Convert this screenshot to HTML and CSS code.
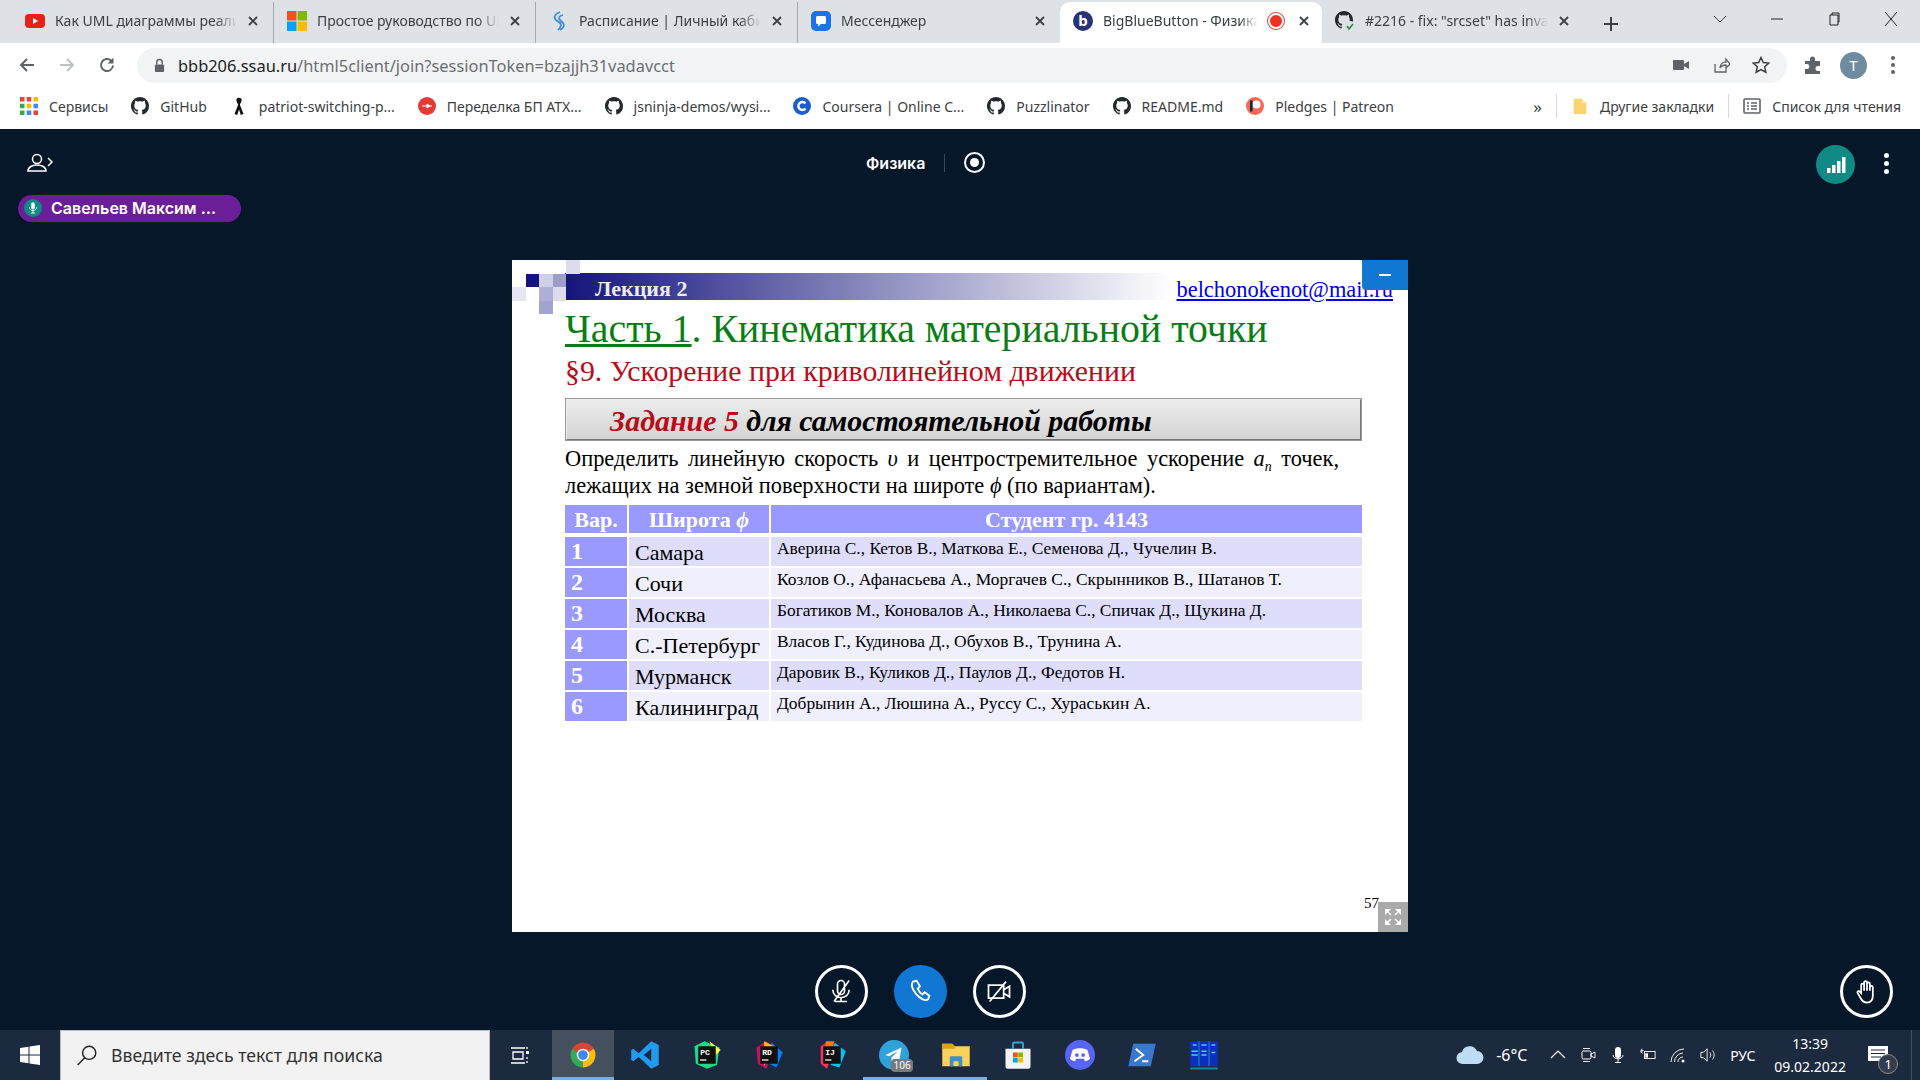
FILE: index.html
```html
<!DOCTYPE html>
<html lang="ru">
<head>
    <meta charset="UTF-8">
    <title>BigBlueButton - Физика</title>
    <link rel="stylesheet" href="styles.css">
</head>
<body>
    <svg class="defs" width="0" height="0">
        <symbol id="gh" viewBox="0 0 16 16"><path d="M8 0C3.58 0 0 3.58 0 8c0 3.54 2.29 6.53 5.47 7.59.4.07.55-.17.55-.38 0-.19-.01-.82-.01-1.49-2.01.37-2.53-.49-2.69-.94-.09-.23-.48-.94-.82-1.13-.28-.15-.68-.52-.01-.53.63-.01 1.08.58 1.23.82.72 1.21 1.87.87 2.33.66.07-.52.28-.87.51-1.07-1.78-.2-3.64-.89-3.64-3.95 0-.87.31-1.59.82-2.15-.08-.2-.36-1.02.08-2.12 0 0 .67-.21 2.2.82.64-.18 1.32-.27 2-.27.68 0 1.36.09 2 .27 1.53-1.04 2.2-.82 2.2-.82.44 1.1.16 1.92.08 2.12.51.56.82 1.27.82 2.15 0 3.07-1.87 3.75-3.65 3.95.29.25.54.73.54 1.48 0 1.07-.01 1.93-.01 2.2 0 .21.15.46.55.38A8.013 8.013 0 0016 8c0-4.42-3.58-8-8-8z"/></symbol>
        <symbol id="x" viewBox="0 0 12 12"><path d="M2 2l8 8M10 2l-8 8" fill="none" stroke="#3c4043" stroke-width="1.8"/></symbol>
    </svg>

    <!-- Tabs -->
    <div class="tabstrip">
        <div class="tab">
            <svg class="fav" viewBox="0 0 20 20"><rect y="3" width="20" height="14" rx="4" fill="#e62117"/><path d="M8 7l5 3-5 3z" fill="#fff"/></svg>
            <span class="tab-title">Как UML диаграммы реализуют</span>
            <svg class="tab-x"><use href="#x"/></svg>
        </div>
        <div class="tab">
            <svg class="fav" viewBox="0 0 20 20"><rect width="9.5" height="9.5" fill="#f25022"/><rect x="10.5" width="9.5" height="9.5" fill="#7fba00"/><rect y="10.5" width="9.5" height="9.5" fill="#00a4ef"/><rect x="10.5" y="10.5" width="9.5" height="9.5" fill="#ffb900"/></svg>
            <span class="tab-title">Простое руководство по UML</span>
            <svg class="tab-x"><use href="#x"/></svg>
        </div>
        <div class="tab">
            <svg class="fav" viewBox="0 0 20 20"><path d="M11 1C6 3 4 6 7 9l4 3c2 2 1 4-2 7M14 4c-4 1-5 3-3 5l3 3c2 2 1 5-3 7" fill="none" stroke="#3f8fdc" stroke-width="1.8"/></svg>
            <span class="tab-title">Расписание | Личный кабинет</span>
            <svg class="tab-x"><use href="#x"/></svg>
        </div>
        <div class="tab tab-last">
            <svg class="fav" viewBox="0 0 20 20"><rect width="20" height="20" rx="5" fill="#1a73e8"/><path d="M5 6.5a1.5 1.5 0 0 1 1.5-1.5h7a1.5 1.5 0 0 1 1.5 1.5v5a1.5 1.5 0 0 1-1.5 1.5H10l-3 2.5V13h-.5A1.5 1.5 0 0 1 5 11.5z" fill="#fff"/></svg>
            <span class="tab-title">Мессенджер</span>
            <svg class="tab-x"><use href="#x"/></svg>
        </div>
        <div class="tab tab-active">
            <svg class="fav" viewBox="0 0 20 20"><circle cx="10" cy="10" r="10" fill="#283274"/><text x="10" y="15" text-anchor="middle" class="fav-b">b</text></svg>
            <span class="tab-title">BigBlueButton - Физика</span>
            <span class="rec-dot"></span>
            <svg class="tab-x"><use href="#x"/></svg>
        </div>
        <div class="tab tab-last">
            <svg class="fav" viewBox="0 0 20 20"><use href="#gh" width="18" height="18" fill="#24292e"/><circle cx="15" cy="15" r="5" fill="#dee1e6"/><path d="M12 15l2 3 4-5" fill="none" stroke="#22863a" stroke-width="1.5"/></svg>
            <span class="tab-title">#2216 - fix: "srcset" has invalid</span>
            <svg class="tab-x"><use href="#x"/></svg>
        </div>
        <svg class="new-tab" viewBox="0 0 16 16"><path d="M8 1v14M1 8h14" stroke="#3c4043" stroke-width="2"/></svg>
        <div class="win-controls">
            <svg viewBox="0 0 14 14"><path d="M1 4l6 6 6-6" fill="none" stroke="#3c4043"/></svg>
            <svg viewBox="0 0 14 14"><path d="M1 7h12" stroke="#222"/></svg>
            <svg viewBox="0 0 14 14"><path d="M3 3h8v10H3zM5 3V1h7v9h-1" fill="none" stroke="#222"/></svg>
            <svg viewBox="0 0 14 14"><path d="M1 0l12 14M13 0L1 14" fill="none" stroke="#222"/></svg>
        </div>
    </div>

    <!-- Address bar -->
    <div class="toolbar">
        <svg class="tb-icon" viewBox="0 0 18 18"><path d="M16 9H3M9 3L3 9l6 6" fill="none" stroke="#5f6368" stroke-width="2"/></svg>
        <svg class="tb-icon" viewBox="0 0 18 18"><path d="M2 9h13M9 3l6 6-6 6" fill="none" stroke="#bdc1c6" stroke-width="2"/></svg>
        <svg class="tb-icon" viewBox="0 0 18 18"><path d="M15 9.5A6 6 0 1 1 13.2 4.7" fill="none" stroke="#5f6368" stroke-width="2"/><path d="M15.5 1.5v6h-6z" fill="#5f6368"/></svg>
        <div class="omnibox">
            <svg class="lock" viewBox="0 0 12 16"><path d="M3 7V4.5a3 3 0 0 1 6 0V7" fill="none" stroke="#5f6368" stroke-width="1.5"/><rect x="1" y="7" width="10" height="8" rx="1" fill="#5f6368"/></svg>
            <span class="url"><b>bbb206.ssau.ru</b>/html5client/join?sessionToken=bzajjh31vadavcct</span>
            <div class="omni-actions">
                <svg viewBox="0 0 18 18"><rect x="1" y="4" width="11" height="10" rx="1" fill="#5f6368"/><path d="M12 8l5-3v8l-5-3z" fill="#5f6368"/></svg>
                <svg viewBox="0 0 18 18"><path d="M3 8v8h11v-5M8 12c0-4 3-6 6-6V3l4 5-4 4V9c-3 0-5 1-6 3z" fill="none" stroke="#5f6368" stroke-width="1.3"/></svg>
                <svg viewBox="0 0 18 18"><path d="M9 1.5l2.3 5 5.4.6-4 3.7 1.1 5.4L9 13.5l-4.8 2.7 1.1-5.4-4-3.7 5.4-.6z" fill="none" stroke="#3c4043" stroke-width="1.5"/></svg>
            </div>
        </div>
        <svg class="tb-puzzle" viewBox="0 0 20 20"><path d="M2 6h5V4a2.5 2.5 0 0 1 5 0v2h5v5h-2a2.5 2.5 0 0 0 0 5h2v3H2v-5h2a2.5 2.5 0 0 0 0-5H2z" fill="#5f6368"/></svg>
        <div class="avatar">T</div>
        <div class="kebab"><i></i><i></i><i></i></div>
    </div>

    <!-- Bookmarks -->
    <div class="bookmarks">
        <a class="bm">
            <svg viewBox="0 0 16 16"><rect width="4" height="4" fill="#ea4335"/><rect x="6" width="4" height="4" fill="#ea4335"/><rect x="12" width="4" height="4" fill="#fbbc04"/><rect y="6" width="4" height="4" fill="#34a853"/><rect x="6" y="6" width="4" height="4" fill="#fbbc04"/><rect x="12" y="6" width="4" height="4" fill="#4285f4"/><rect y="12" width="4" height="4" fill="#34a853"/><rect x="6" y="12" width="4" height="4" fill="#4285f4"/><rect x="12" y="12" width="4" height="4" fill="#ea4335"/></svg>
            Сервисы
        </a>
        <a class="bm"><svg class="gh-mark"><use href="#gh"/></svg>GitHub</a>
        <a class="bm">
            <svg viewBox="0 0 16 20"><path d="M8 6l5 13-3 1-2-6-2 6-3-1zM8 8c2-2 2-4 1-6H7C6 4 6 6 8 8z" fill="#111"/><path d="M5 3c0-3 6-3 6 0 0 2-2 5-3 7-1-2-3-5-3-7z" fill="#111"/></svg>
            patriot-switching-p...
        </a>
        <a class="bm">
            <svg viewBox="0 0 18 18"><circle cx="9" cy="9" r="9" fill="#e53935"/><path d="M4 9h10M9 7l3 2-3 2z" stroke="#fff" fill="#fff"/></svg>
            Переделка БП АТХ...
        </a>
        <a class="bm"><svg class="gh-mark"><use href="#gh"/></svg>jsninja-demos/wysi...</a>
        <a class="bm">
            <svg viewBox="0 0 18 18"><circle cx="9" cy="9" r="9" fill="#1a5dd0"/><path d="M12.5 6.5a4 4 0 1 0 0 5" fill="none" stroke="#fff" stroke-width="2.5"/></svg>
            Coursera | Online C...
        </a>
        <a class="bm"><svg class="gh-mark"><use href="#gh"/></svg>Puzzlinator</a>
        <a class="bm"><svg class="gh-mark"><use href="#gh"/></svg>README.md</a>
        <a class="bm">
            <svg viewBox="0 0 18 18"><circle cx="9" cy="9" r="9" fill="#f96854"/><circle cx="10.5" cy="7.5" r="4" fill="#fff"/><rect x="4" y="3.5" width="2.5" height="11" fill="#052d49"/></svg>
            Pledges | Patreon
        </a>
        <div class="bm-right">
            <span class="bm-more">»</span>
            <span class="bm-sep"></span>
            <a class="bm">
                <svg viewBox="0 0 16 20"><path d="M1 2h9l5 5v12H1z" fill="#fbd46d"/><path d="M10 2l5 5h-5z" fill="#fce9a8"/></svg>
                Другие закладки
            </a>
            <span class="bm-sep"></span>
            <a class="bm">
                <svg viewBox="0 0 18 18"><rect x="1" y="2" width="16" height="14" rx="1" fill="none" stroke="#5f6368" stroke-width="1.6"/><path d="M4 6h2M8 6h6M4 9h2M8 9h6M4 12h2M8 12h6" stroke="#5f6368" stroke-width="1.4"/></svg>
                Список для чтения
            </a>
        </div>
    </div>

    <!-- BigBlueButton -->
    <main class="room">
        <div class="room-nav">
            <svg class="userlist-btn" viewBox="0 0 28 20"><circle cx="11" cy="6" r="4.5" fill="none" stroke="#fff" stroke-width="1.5"/><path d="M2 18c0-8 18-8 18 0z" fill="none" stroke="#fff" stroke-width="1.5"/><path d="M22 5l4 4-4 4" fill="none" stroke="#fff" stroke-width="1.5"/></svg>
            <div class="room-title">
                <span class="room-name">Физика</span>
                <span class="room-sep"></span>
                <span class="rec-btn"><i></i></span>
            </div>
            <div class="room-right">
                <span class="conn">
                    <svg viewBox="0 0 20 16"><rect x="1" y="11" width="3.5" height="5" fill="#fff"/><rect x="6" y="8" width="3.5" height="8" fill="#fff"/><rect x="11" y="4" width="3.5" height="12" fill="#fff"/><rect x="16" y="0" width="3.5" height="16" fill="#fff"/></svg>
                </span>
                <div class="room-dots"><i></i><i></i><i></i></div>
            </div>
        </div>

        <div class="talkers">
            <div class="talker">
                <span class="talker-mic">
                    <svg viewBox="0 0 14 16"><rect x="4.5" y="0" width="5" height="10" rx="2.5" fill="#fff"/><path d="M2 7c0 6 10 6 10 0M7 12v3M4 15h6" fill="none" stroke="#fff" stroke-width="1.3"/></svg>
                </span>
                Савельев Максим …
            </div>
        </div>

        <div class="stage">
            <section class="slide">
                <svg class="slide-deco" viewBox="0 0 5 4" shape-rendering="crispEdges">
                    <rect x="4" y="0" width="1" height="1" fill="#dcdcee"/>
                    <rect x="1" y="1" width="1" height="1" fill="#14147c"/>
                    <rect x="2" y="1" width="1" height="1" fill="#cfcfe8"/>
                    <rect x="3" y="1" width="1" height="1" fill="#9d9dcc"/>
                    <rect x="0" y="2" width="1" height="1" fill="#e6e6f3"/>
                    <rect x="2" y="2" width="1" height="1" fill="#aeaed6"/>
                    <rect x="3" y="2" width="1" height="1" fill="#dcdcee"/>
                    <rect x="2" y="3" width="1" height="1" fill="#a3a3d0"/>
                </svg>
                <div class="slide-banner">
                    <span class="slide-lecture">Лекция 2</span>
                    <a class="slide-mail">belchonokenot@mail.ru</a>
                </div>
                <h1 class="slide-h1"><u>Часть 1</u>. Кинематика материальной точки</h1>
                <h2 class="slide-h2">§9. Ускорение при криволинейном движении</h2>
                <div class="task-box"><em>Задание 5</em> для самостоятельной работы</div>
                <p class="task-text">Определить линейную скорость <i>υ</i> и центростремительное ускорение <i>a<sub>n</sub></i> точек, лежащих на земной поверхности на широте <i>ϕ</i> (по вариантам).</p>
                <table class="variants">
                    <thead>
                        <tr><th class="col-var">Вар.</th><th class="col-city">Широта <i>ϕ</i></th><th>Студент гр. 4143</th></tr>
                    </thead>
                    <tbody>
                        <tr><td class="num">1</td><td class="city">Самара</td><td class="names">Аверина С., Кетов В., Маткова Е., Семенова Д., Чучелин В.</td></tr>
                        <tr><td class="num">2</td><td class="city">Сочи</td><td class="names">Козлов О., Афанасьева А., Моргачев С., Скрынников В., Шатанов Т.</td></tr>
                        <tr><td class="num">3</td><td class="city">Москва</td><td class="names">Богатиков М., Коновалов А., Николаева С., Спичак Д., Щукина Д.</td></tr>
                        <tr><td class="num">4</td><td class="city">С.-Петербург</td><td class="names">Власов Г., Кудинова Д., Обухов В., Трунина А.</td></tr>
                        <tr><td class="num">5</td><td class="city">Мурманск</td><td class="names">Даровик В., Куликов Д., Паулов Д., Федотов Н.</td></tr>
                        <tr><td class="num">6</td><td class="city">Калининград</td><td class="names">Добрынин А., Люшина А., Руссу С., Хураськин А.</td></tr>
                    </tbody>
                </table>
                <button class="slide-min"><span></span></button>
                <span class="slide-page">57</span>
                <button class="slide-full">
                    <svg viewBox="0 0 20 20"><path d="M2 2h6L2 8zM18 2v6l-6-6zM2 18v-6l6 6zM18 18h-6l6-6z" fill="#fff"/><path d="M4 4l4 4M16 4l-4 4M4 16l4-4M16 16l-4-4" stroke="#fff" stroke-width="1.5"/></svg>
                </button>
            </section>
        </div>

        <div class="actions">
            <div class="actions-center">
                <button class="round-btn">
                    <svg viewBox="0 0 24 24"><path d="M9 12V6a3 3 0 0 1 6 0v6a3 3 0 0 1-6 0zM5 11c0 9 14 9 14 0M12 18v3M7 21h10M6 21L19 3" fill="none" stroke="#fff" stroke-width="1.4"/></svg>
                </button>
                <button class="round-btn round-blue">
                    <svg viewBox="0 0 24 24"><path d="M6 4l3-1 3 5-2 2c1 2 2 4 4 5l2-2 4 3-1 3c-1 1-3 1-5 0-4-2-8-7-9-11 0-2 0-3 1-4z" fill="none" stroke="#fff" stroke-width="1.6"/></svg>
                </button>
                <button class="round-btn">
                    <svg viewBox="0 0 24 24"><path d="M3 7h13v11H3zM16 11l5-3v9l-5-3zM4 21L18 4" fill="none" stroke="#fff" stroke-width="1.5"/></svg>
                </button>
            </div>
            <button class="round-btn round-hand">
                <svg viewBox="0 0 24 24"><path d="M7 13V6a1.2 1.2 0 0 1 2.5 0v5V4a1.2 1.2 0 0 1 2.5 0v7V5a1.2 1.2 0 0 1 2.5 0v6-3a1.2 1.2 0 0 1 2.5 0v7c0 4-2 6-5 6-2.5 0-4-1-5-3l-3-5c-.8-1.5 1-2.5 2-1z" fill="none" stroke="#fff" stroke-width="1.5"/></svg>
            </button>
        </div>
    </main>

    <!-- Windows taskbar -->
    <footer class="taskbar">
        <div class="start">
            <svg viewBox="0 0 20 20"><path d="M0 3l8.5-1.2V9.5H0zM9.5 1.6L20 0v9.5H9.5zM0 10.5h8.5v7.7L0 17zM9.5 10.5H20V20L9.5 18.4z" fill="#fff"/></svg>
        </div>
        <div class="search">
            <svg viewBox="0 0 20 20"><circle cx="12" cy="8" r="6" fill="none" stroke="#222" stroke-width="1.3"/><path d="M8 12.5L1.5 19" stroke="#222" stroke-width="1.3"/></svg>
            Введите здесь текст для поиска
        </div>
        <div class="task-apps">
            <span class="app">
                <svg viewBox="0 0 22 22"><path d="M1 4h14M3 8h10v7H3zM1 19h14M17 3v2M17 13v2M17 17v2" fill="none" stroke="#fff" stroke-width="1.3"/><rect x="16" y="7" width="3" height="3" fill="#fff"/></svg>
            </span>
            <span class="app app-active">
                <svg viewBox="0 0 24 24"><path d="M12 12L3.34 7A10 10 0 0 1 20.66 7z" fill="#db4437"/><path d="M12 12L20.66 7A10 10 0 0 1 12 22z" fill="#fbbc05"/><path d="M12 12L12 22A10 10 0 0 1 3.34 7z" fill="#34a853"/><circle cx="12" cy="12" r="5" fill="#fff"/><circle cx="12" cy="12" r="3.9" fill="#4285f4"/></svg>
            </span>
            <span class="app">
                <svg viewBox="0 0 24 24"><path d="M17 1l6 3v16l-6 3L7 13.5 2.5 17 1 16v-8l1.5-1L7 10.5zM17 7l-6 5 6 5z" fill="#1f9cf0" fill-rule="evenodd"/></svg>
            </span>
            <span class="app">
                <svg viewBox="0 0 24 24"><path d="M2 5l8-4 12 5-2 14-8 3-9-4z" fill="#21d789"/><path d="M14 1l9 7-5 5z" fill="#fcf84a"/><rect x="5" y="5" width="14" height="14" fill="#111"/><text x="6.5" y="12" class="jb-label">PC</text><rect x="6.5" y="15.5" width="5" height="1" fill="#fff"/></svg>
            </span>
            <span class="app">
                <svg viewBox="0 0 24 24"><path d="M2 6l8-5 6 4-6 18-7-4z" fill="#c90f5e"/><path d="M14 2l9 8-5 12-6-3z" fill="#087cfa"/><path d="M8 1l8 4-8 16z" fill="#fdb60d"/><rect x="5" y="5" width="14" height="14" fill="#111"/><text x="6.5" y="12" class="jb-label">RD</text><rect x="6.5" y="15.5" width="5" height="1" fill="#fff"/></svg>
            </span>
            <span class="app">
                <svg viewBox="0 0 24 24"><path d="M3 5l6-4 6 3-7 19-5-4z" fill="#fe315d"/><path d="M14 2l9 7-5 13-7-2z" fill="#07c3f2"/><path d="M7 1h7L7 18z" fill="#f97a12"/><rect x="5" y="5" width="14" height="14" fill="#111"/><text x="6.5" y="12" class="jb-label">IJ</text><rect x="6.5" y="15.5" width="5" height="1" fill="#fff"/></svg>
            </span>
            <span class="app app-open">
                <svg viewBox="0 0 24 24"><circle cx="12" cy="12" r="12" fill="#2fa3d9"/><path d="M5 12l13-6-2 12-4-3-2 2v-3l5-5-7 4z" fill="#fff"/></svg>
                <span class="app-badge">106</span>
            </span>
            <span class="app app-open">
                <svg viewBox="0 0 24 24"><path d="M1 3h8l2 2h12v16H1z" fill="#f9d25c"/><path d="M1 3h8l2 2v2H1z" fill="#d9a21b"/><path d="M7 21v-7a1 1 0 0 1 1-1h8a1 1 0 0 1 1 1v7h-3v-4h-4v4z" fill="#3f8fc9"/></svg>
            </span>
            <span class="app">
                <svg viewBox="0 0 24 24"><path d="M2 7h20v14a2 2 0 0 1-2 2H4a2 2 0 0 1-2-2z" fill="#f3f3f3"/><path d="M8 7V3a1 1 0 0 1 1-1h6a1 1 0 0 1 1 1v4" fill="none" stroke="#35a5d8" stroke-width="1.5"/><rect x="8" y="10" width="3.8" height="3.8" fill="#f25022"/><rect x="12.2" y="10" width="3.8" height="3.8" fill="#7fba00"/><rect x="8" y="14.2" width="3.8" height="3.8" fill="#00a4ef"/><rect x="12.2" y="14.2" width="3.8" height="3.8" fill="#ffb900"/></svg>
            </span>
            <span class="app">
                <svg viewBox="0 0 24 24"><circle cx="12" cy="12" r="12" fill="#5865f2"/><path d="M6 8c3-2 9-2 12 0l2 7c-1 1-3 2-4 2l-1-2H9l-1 2c-1 0-3-1-4-2z" fill="#fff"/><circle cx="9.5" cy="12" r="1.5" fill="#5865f2"/><circle cx="14.5" cy="12" r="1.5" fill="#5865f2"/></svg>
            </span>
            <span class="app">
                <svg viewBox="0 0 24 24"><path d="M5 3h18l-4 18H1z" fill="#3a78d0"/><path d="M7 7l6 5-7 5M12 17h5" fill="none" stroke="#fff" stroke-width="1.5"/></svg>
            </span>
            <span class="app">
                <svg viewBox="0 0 24 24"><rect x="1" y="1" width="22" height="20" fill="#0d2fbf"/><path d="M8 1v20M16 1v20" stroke="#0bb" stroke-width=".6"/><path d="M3 4h3M10 4h4M18 4h3M2 9h5M10 9h4M2 12h5M10 12h4M18 10h3" stroke="#5cc5ff" stroke-width="1.2"/><rect x="1" y="22" width="22" height="1.5" fill="#0a8f8f"/></svg>
            </span>
        </div>
        <div class="tray">
            <svg class="tray-cloud" viewBox="0 0 28 20"><path d="M7 19a6 6 0 0 1-1-12 8 8 0 0 1 15-1 6.5 6.5 0 0 1 0 13z" fill="#bfdcf5"/></svg>
            <span class="tray-temp">-6°C</span>
            <svg class="tray-i" viewBox="0 0 16 16"><path d="M1 11l7-7 7 7" fill="none" stroke="#fff" stroke-width="1.2"/></svg>
            <svg class="tray-i" viewBox="0 0 16 16"><rect x="2" y="4" width="9" height="8" rx="1.5" fill="none" stroke="#fff"/><path d="M11 7l4-2v6l-4-2zM3 1.5h7M3 14.5h7" fill="none" stroke="#fff" stroke-width=".9"/></svg>
            <svg class="tray-i" viewBox="0 0 16 16"><rect x="5" y="0" width="6" height="11" rx="3" fill="#fff"/><path d="M3 8c0 5 10 5 10 0M8 12v3M5 15.5h6" fill="none" stroke="#fff"/></svg>
            <svg class="tray-i" viewBox="0 0 18 16"><rect x="5" y="4" width="12" height="8" fill="none" stroke="#fff"/><rect x="6" y="6" width="3" height="5" fill="#fff"/><path d="M1 3h3M2 1v4M1 3v2l2 1" fill="none" stroke="#fff"/></svg>
            <svg class="tray-i" viewBox="0 0 16 16"><path d="M1 15A13 13 0 0 1 14 2M4.5 15A9 9 0 0 1 13 6M8 15a5 5 0 0 1 5-5" fill="none" stroke="#fff" stroke-width=".9"/><circle cx="13" cy="14" r="1.5" fill="#fff"/></svg>
            <svg class="tray-i" viewBox="0 0 18 16"><path d="M1 5h3l4-4v14l-4-4H1zM11 5c1.5 2 1.5 4 0 6M14 3c2.5 3 2.5 7 0 10" fill="none" stroke="#fff"/></svg>
            <span class="tray-lang">РУС</span>
            <div class="tray-clock"><span>13:39</span><span>09.02.2022</span></div>
            <div class="tray-note">
                <svg viewBox="0 0 20 18"><path d="M0 0h20v15H0z" fill="#fff"/><path d="M3 4h14M3 7.5h14M3 11h10" stroke="#1b2a40"/></svg>
                <span class="note-badge">1</span>
            </div>
        </div>
    </footer>
</body>
</html>
```

FILE: styles.css
```css
/* Page */
* {
    box-sizing: border-box;
}
html, body {
    height: 100%;
}
body {
    margin: 0;
    width: 1920px;
    height: 1080px;
    display: flex;
    flex-direction: column;
    overflow: hidden;
    font-family: "Noto Sans", sans-serif;
    color: #3c4043;
}
.defs {
    position: absolute;
}

/* Tabs */
.tabstrip {
    height: 43px;
    flex: none;
    display: flex;
    align-items: flex-end;
    padding-left: 12px;
    background-color: #dee1e6;
}
.tab {
    width: 262px;
    height: 41px;
    display: flex;
    align-items: center;
    gap: 10px;
    padding: 0 14px 4px 13px;
    font-size: 14px;
    position: relative;
    border-right: 1px solid #a6a9ad;
}
.tab-last {
    border-right: none;
}
.tab-active {
    background-color: #fff;
    border-right: none;
    border-radius: 10px 10px 0 0;
    padding-right: 12px;
}
.fav {
    width: 20px;
    height: 20px;
    flex: none;
}
.fav-b {
    font: bold 15px "Noto Sans", sans-serif;
    fill: #fff;
}
.tab-title {
    flex: 1;
    min-width: 0;
    white-space: nowrap;
    overflow: hidden;
    -webkit-mask-image: linear-gradient(to right, #000 88%, transparent);
    mask-image: linear-gradient(to right, #000 88%, transparent);
}
.rec-dot {
    width: 16px;
    height: 16px;
    flex: none;
    margin-right: 4px;
    border-radius: 50%;
    background-color: #ea3323;
    box-shadow: inset 0 0 0 2px #fff, 0 0 0 1px #e04030;
}
.tab-x {
    width: 12px;
    height: 12px;
    flex: none;
}
.new-tab {
    width: 16px;
    height: 16px;
    margin: 0 0 11px 19px;
}
.win-controls {
    margin-left: auto;
    display: flex;
    align-self: flex-start;
    margin-top: 12px;
    gap: 43px;
    padding-right: 22px;
}
.win-controls svg {
    width: 14px;
    height: 14px;
}

/* Address bar */
.toolbar {
    height: 44px;
    flex: none;
    display: flex;
    align-items: center;
    padding: 0 20px 0 18px;
    background-color: #fff;
}
.tb-icon {
    width: 18px;
    height: 18px;
    margin-right: 22px;
}
.omnibox {
    height: 35px;
    flex: none;
    width: 1650px;
    margin-left: -1px;
    border-radius: 18px;
    background-color: #f1f3f4;
    display: flex;
    align-items: center;
    padding: 0 17px 0 17px;
}
.lock {
    width: 11px;
    height: 15px;
    margin-right: 13px;
}
.url {
    font-size: 16.4px;
    color: #6b6f73;
}
.url b {
    font-weight: 400;
    color: #202124;
}
.omni-actions {
    margin-left: auto;
    display: flex;
    gap: 22px;
}
.omni-actions svg {
    width: 18px;
    height: 18px;
}
.tb-puzzle {
    width: 20px;
    height: 20px;
    margin-left: 16px;
}
.avatar {
    width: 27px;
    height: 27px;
    margin-left: 17px;
    border-radius: 50%;
    background-color: #6f8ba0;
    color: #fff;
    font-size: 15px;
    text-align: center;
    line-height: 27px;
}
.kebab, .room-dots {
    display: flex;
    flex-direction: column;
    align-items: center;
    gap: 3px;
}
.kebab {
    margin-left: 24px;
}
.kebab i {
    width: 4px;
    height: 4px;
    border-radius: 50%;
    background-color: #5f6368;
}

/* Bookmarks */
.bookmarks {
    height: 42px;
    flex: none;
    display: flex;
    align-items: center;
    gap: 23px;
    padding: 0 19px 4px 20px;
    font-size: 14px;
    background-color: #fff;
}
.bm {
    display: flex;
    align-items: center;
    gap: 11px;
    white-space: nowrap;
}
.bm svg {
    width: 18px;
    height: 18px;
    flex: none;
}
.gh-mark {
    fill: #24292e;
}
.bm-right {
    margin-left: auto;
    display: flex;
    align-items: center;
    gap: 14px;
}
.bm-more {
    font-size: 17px;
}
.bm-sep {
    width: 1px;
    height: 24px;
    background-color: #d5d7da;
}

/* BigBlueButton room */
.room {
    flex: 1;
    min-height: 0;
    display: flex;
    flex-direction: column;
    background-color: #06172a;
}
.room-nav {
    height: 66px;
    flex: none;
    display: flex;
    align-items: center;
    justify-content: space-between;
    padding: 2px 31px 0 26px;
    position: relative;
}
.userlist-btn {
    width: 28px;
    height: 20px;
}
.room-title {
    position: absolute;
    left: 866px;
    top: 23px;
    display: flex;
    align-items: center;
    gap: 19px;
    color: #fff;
}
.room-name {
    font: 600 16px "Inter", sans-serif;
}
.room-sep {
    width: 1px;
    height: 18px;
    background-color: #3a4757;
}
.rec-btn {
    width: 21px;
    height: 21px;
    border: 2px solid #fff;
    border-radius: 50%;
    display: flex;
    align-items: center;
    justify-content: center;
}
.rec-btn i {
    width: 9px;
    height: 9px;
    border-radius: 50%;
    background-color: #fff;
}
.room-right {
    display: flex;
    align-items: center;
    gap: 29px;
}
.conn {
    width: 39px;
    height: 39px;
    margin-top: 3px;
    border-radius: 50%;
    background-color: #0f8a84;
    display: flex;
    align-items: center;
    justify-content: center;
}
.conn svg {
    width: 20px;
    height: 16px;
}
.room-dots i {
    width: 5px;
    height: 5px;
    border-radius: 50%;
    background-color: #fff;
}
.talkers {
    height: 27px;
    flex: none;
    padding-left: 18px;
}
.talker {
    width: 223px;
    height: 27px;
    display: flex;
    align-items: center;
    gap: 9px;
    padding: 0 0 1px 6px;
    border-radius: 14px;
    background-color: #6a1f98;
    color: #fff;
    font: 600 16px "Inter", sans-serif;
    white-space: nowrap;
}
.talker-mic {
    width: 18px;
    height: 18px;
    border-radius: 50%;
    background-color: #0f8a84;
    display: flex;
    align-items: center;
    justify-content: center;
}
.talker-mic svg {
    width: 10px;
    height: 12px;
}

/* Slide */
.stage {
    display: flex;
    justify-content: center;
    padding-top: 38px;
}
.slide {
    width: 896px;
    height: 672px;
    position: relative;
    padding: 13px 46px 0 53px;
    background-color: #fff;
    font-family: "Liberation Serif", serif;
    color: #000;
}
.slide-deco {
    position: absolute;
    left: 0;
    top: 0;
    width: 68px;
    height: 54px;
}
.slide-banner {
    height: 27px;
    margin-right: -46px;
    display: flex;
    align-items: center;
    justify-content: space-between;
    padding: 5px 15px 0 30px;
    background: linear-gradient(to right, #14147c, #fff 72%);
}
.slide-lecture {
    font-size: 22px;
    font-weight: bold;
    color: #ececf4;
}
.slide-mail {
    font-size: 22.4px;
    color: #0000ee;
    text-decoration: underline;
    margin-top: 2px;
}
.slide-h1 {
    margin: 6px 0 0;
    font-size: 39.8px;
    line-height: 46px;
    font-weight: normal;
    color: #0a7d14;
}
.slide-h2 {
    margin: 2px 0 0;
    font-size: 29.8px;
    line-height: 33px;
    font-weight: normal;
    color: #b80d18;
}
.task-box {
    height: 43px;
    margin-top: 11px;
    padding-left: 43px;
    border: 2px solid;
    border-color: #eee #777 #777 #eee;
    outline: 1px solid #999;
    outline-offset: -1px;
    background: linear-gradient(to bottom, #ececec, #d4d4d4);
    font-size: 29.9px;
    line-height: 41px;
    font-weight: bold;
    font-style: italic;
}
.task-box em {
    color: #b80d18;
}
.task-text {
    margin: 4px 0 0;
    padding-right: 23px;
    font-size: 22.4px;
    line-height: 27px;
    text-align: justify;
}
.task-text sub {
    font-size: 14px;
    line-height: 0;
}
.variants {
    width: 801px;
    margin: 4px 0 0 -2px;
    border-collapse: separate;
    border-spacing: 2px;
    table-layout: fixed;
}
.variants th {
    height: 30px;
    padding: 2px 0 0;
    border-bottom: 2px solid #fff;
    background-color: #9999ff;
    background-clip: padding-box;
    color: #fff;
    font-size: 22px;
    line-height: 26px;
}
.col-var {
    width: 62px;
}
.col-city {
    width: 140px;
}
.variants td {
    height: 29px;
    padding: 0;
    background-color: #dedefc;
}
.variants tr:nth-child(even) td {
    background-color: #efeffd;
}
.variants tr td.num {
    padding-left: 6px;
    background-color: #9999ff;
    color: #fff;
    font-size: 24px;
    font-weight: bold;
}
.variants td.city {
    padding: 2px 0 0 6px;
    font-size: 22px;
    white-space: nowrap;
}
.variants td.names {
    padding: 0 0 6px 6px;
    font-size: 17.4px;
    white-space: nowrap;
}
.slide-min {
    position: absolute;
    right: 0;
    top: 0;
    width: 46px;
    height: 30px;
    border: none;
    padding: 0;
    border-radius: 0 0 0 4px;
    background-color: #1276d3;
    display: flex;
    align-items: center;
    justify-content: center;
}
.slide-min span {
    width: 12px;
    height: 2px;
    background-color: #fff;
}
.slide-page {
    position: absolute;
    right: 29px;
    bottom: 20px;
    font-size: 15px;
}
.slide-full {
    position: absolute;
    right: 0;
    bottom: 0;
    width: 30px;
    height: 30px;
    border: none;
    padding: 5px;
    background-color: #aaa;
}
.slide-full svg {
    display: block;
    width: 20px;
    height: 20px;
}

/* Bottom actions */
.actions {
    flex: 1;
    display: flex;
    align-items: center;
    justify-content: center;
    padding: 20px 80px 0 0;
    position: relative;
}
.actions-center {
    display: flex;
    gap: 26px;
}
.round-btn {
    width: 53px;
    height: 53px;
    padding: 0;
    border: 3px solid #fff;
    border-radius: 50%;
    background: transparent;
    display: flex;
    align-items: center;
    justify-content: center;
}
.round-btn svg {
    width: 28px;
    height: 28px;
}
.round-blue {
    border: none;
    background-color: #1276d3;
}
.round-hand {
    position: absolute;
    right: 27px;
    top: 33px;
}

/* Windows taskbar */
.taskbar {
    height: 50px;
    flex: none;
    display: flex;
    align-items: center;
    background-color: #1c2a3f;
    color: #fff;
}
.start {
    width: 60px;
    flex: none;
    display: flex;
    justify-content: center;
}
.start svg {
    width: 20px;
    height: 20px;
}
.search {
    width: 430px;
    height: 50px;
    flex: none;
    display: flex;
    align-items: center;
    gap: 13px;
    padding: 0 0 2px 15px;
    background-color: #f2f2f2;
    border: 1px solid #bcbcbc;
    border-bottom: none;
    color: #333;
    font-size: 17.7px;
}
.search svg {
    width: 22px;
    height: 22px;
}
.task-apps {
    display: flex;
    flex: none;
    height: 100%;
}
.app {
    width: 62.1px;
    height: 100%;
    position: relative;
    display: flex;
    align-items: center;
    justify-content: center;
}
.app svg {
    width: 30px;
    height: 30px;
}
.app:first-child svg {
    width: 22px;
    height: 22px;
}
.app-active {
    background-color: #45505f;
    box-shadow: inset 0 -3px 0 #76b0e3;
}
.app-open {
    border-bottom: 3px solid #76b0e3;
    padding-top: 3px;
    background-clip: padding-box;
}
.app-badge {
    position: absolute;
    right: 12px;
    bottom: 5px;
    padding: 0 2px;
    border-radius: 4px;
    background-color: #7a7a7a;
    font-size: 10px;
    line-height: 13px;
}
.jb-label {
    font: bold 6.5px "Liberation Mono", monospace;
    fill: #fff;
}
.tray {
    flex: 1;
    height: 100%;
    display: flex;
    align-items: center;
    margin-right: 8px;
    padding-left: 221px;
    border-right: 1px solid #44505f;
    font-size: 15px;
}
.tray-cloud {
    width: 28px;
    height: 20px;
    margin-right: 12px;
    flex: none;
}
.tray-temp {
    font-size: 16px;
    width: 54px;
    flex: none;
}
.tray-i {
    width: 16px;
    height: 16px;
    flex: none;
    margin-right: 14px;
}
.tray-lang {
    width: 39px;
    flex: none;
    font-size: 14px;
}
.tray-clock {
    width: 82px;
    flex: none;
    display: flex;
    flex-direction: column;
    align-items: center;
    line-height: 23px;
    font-size: 14px;
}
.tray-note {
    position: relative;
    margin-left: 17px;
    width: 20px;
    height: 18px;
    flex: none;
}
.tray-note svg {
    display: block;
    width: 20px;
    height: 18px;
}
.note-badge {
    position: absolute;
    left: 10px;
    top: 8px;
    width: 20px;
    height: 20px;
    border: 1px solid #888;
    border-radius: 50%;
    background-color: #333d4d;
    font-size: 13px;
    line-height: 18px;
    text-align: center;
}
```
